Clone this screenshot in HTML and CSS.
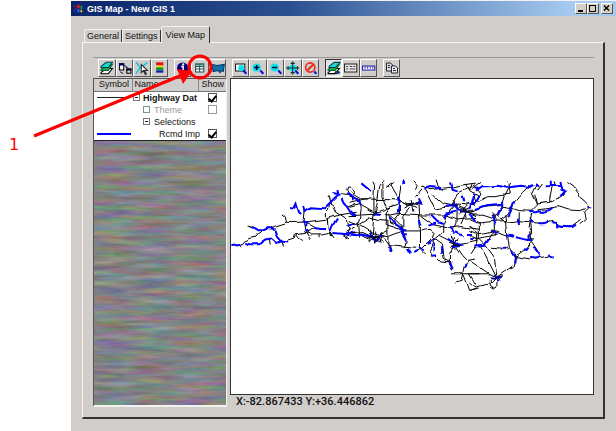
FILE: index.html
```html
<!DOCTYPE html>
<html lang="en">
<head>
<meta charset="utf-8">
<title>GIS Map - New GIS 1</title>
<link rel="stylesheet" href="styles.css">
</head>
<body>
<main class="window">
  <header class="titlebar">
    <svg class="app-icon" viewBox="0 0 12 12" aria-hidden="true"><path fill="#e02020" d="M5 1h3v4H5z"/><path fill="#20a040" d="M9 2h2v4H9z"/><path fill="#3058e8" d="M5 6h3v4H5z"/><path fill="#e8d020" d="M9 7h2v3H9z"/><path fill="#c02020" d="M1 2h2v2H1zM2 5h2v1H2z"/><path fill="#2040c0" d="M1 7h2v2H1z"/></svg>
    <h1>GIS Map - New GIS 1</h1>
    <div class="window-buttons">
      <button aria-label="Minimize"><svg viewBox="0 0 10 9"><path d="M2 7h5" stroke="#000" stroke-width="2"/></svg></button>
      <button aria-label="Maximize"><svg viewBox="0 0 10 9"><path d="M1.500 1v6.500h6V1M1 1.500h7" fill="none" stroke="#000"/><path d="M1 1h7v1H1z"/></svg></button>
      <button class="close" aria-label="Close"><svg viewBox="0 0 10 9"><path d="M2 1.500l5 5M7 1.500l-5 5" stroke="#000" stroke-width="1.500"/></svg></button>
    </div>
  </header>

  <nav class="tabs">
    <button class="tab">General</button>
    <button class="tab">Settings</button>
    <button class="tab active">View Map</button>
  </nav>

  <section class="panel">
    <div class="toolbar">
      <div class="group four">
        <button aria-label="Layers"><svg viewBox="0 0 15 15"><path d="M2 12l5-4h6l-4 5H2z" fill="#fff" stroke="#000"/><path d="M2 9l5-5h6L9 10H2z" fill="#20a040" stroke="#064"/><path d="M2 6l5-4h6L9 7H2z" fill="#20d8d8" stroke="#044"/></svg></button>
        <button aria-label="Join"><svg viewBox="0 0 15 15"><path d="M2.500 3.500h4v6h-4z" fill="#fff" stroke="#000"/><path d="M2 3h5v2H2zM9 8h5v2H9z" fill="#006"/><path d="M9.500 8.500h4v4h-4z" fill="none" stroke="#000"/><path d="M7 5l4 3M3 11l3 2" stroke="#224"/></svg></button>
        <button aria-label="Select"><svg viewBox="0 0 15 15"><path d="M2 2l4 5-4 6M13 2L7 7" fill="none" stroke="#10c8e0" stroke-width="1.500"/><path d="M7 4v8l2-2 2 4 1-1-2-3h3z" fill="#fff" stroke="#222"/></svg></button>
        <button aria-label="Theme colors"><svg viewBox="0 0 15 15"><path d="M4 2h7v3H4z" fill="#e01010"/><path d="M4 5h7v2H4z" fill="#e8d010"/><path d="M4 7h7v3H4z" fill="#109030"/><path d="M4 10h7v2H4z" fill="#1010c0"/></svg></button>
      </div>
      <div class="group three">
        <button aria-label="Info"><svg viewBox="0 0 15 15"><circle cx="7.500" cy="7.500" r="5.500" fill="#000080"/><path d="M6 6h2v5M6 11h4" stroke="#fff" fill="none" stroke-width="1.500"/><path d="M7 3h2v2H7z" fill="#fff"/></svg></button>
        <button aria-label="Table"><svg viewBox="0 0 15 15"><path d="M3.500 3.500h8v8h-8zM3.500 6h8M3.500 8.500h8M7.500 4v8" fill="#fff" stroke="#24504c"/><path d="M3 3h9v2H3z" fill="#347c78"/></svg></button>
        <button aria-label="State map"><svg viewBox="0 0 15 15"><path d="M2 4l5 1 7-1-1 7-2-1-1 2-2-2-5 1z" fill="#1070a8" stroke="#003868"/></svg></button>
      </div>
      <div class="group five">
        <button aria-label="Zoom window"><svg viewBox="0 0 15 15"><path d="M2.500 3.500h9v7h-9z" fill="#fff" stroke="#111"/><circle cx="8" cy="7.500" r="3" fill="#10e0e8"/><path d="M10 10l3 3" stroke="#0010e0" stroke-width="2"/></svg></button>
        <button aria-label="Zoom in"><svg viewBox="0 0 15 15"><circle cx="6.500" cy="7" r="4" fill="#10e0e8"/><path d="M4 7h5M6.500 4.500v5" stroke="#003" stroke-width="1.500"/><path d="M10 10l3 3" stroke="#0010e0" stroke-width="2"/></svg></button>
        <button aria-label="Zoom out"><svg viewBox="0 0 15 15"><circle cx="6.500" cy="7" r="4" fill="#10e0e8"/><path d="M4 7h5" stroke="#003" stroke-width="1.500"/><path d="M10 10l3 3" stroke="#0010e0" stroke-width="2"/></svg></button>
        <button aria-label="Zoom extents"><svg viewBox="0 0 15 15"><circle cx="7.500" cy="7.500" r="3.500" fill="#10e0e8"/><path d="M1 7.500h13M7.500 1v13M3 5.500v4M12 5.500v4M5.500 3h4M5.500 12h4" stroke="#033"/><path d="M10 10l3 3" stroke="#0010e0" stroke-width="2"/></svg></button>
        <button aria-label="Clear zoom"><svg viewBox="0 0 15 15"><circle cx="7" cy="7" r="4.500" fill="#c8d0d0" stroke="#f02818" stroke-width="1.500"/><path d="M4 10l6-6" stroke="#f02818" stroke-width="2"/><path d="M11 11l2 2" stroke="#0010e0" stroke-width="2"/></svg></button>
      </div>
      <div class="group three">
        <button class="pressed" aria-label="Show layers"><svg viewBox="0 0 15 15"><path d="M2 12l5-4h6l-4 5H2z" fill="#fff" stroke="#000"/><path d="M2 9l5-5h6L9 10H2z" fill="#20a040" stroke="#064"/><path d="M3 6l5-4h6L9 7H3z" fill="#20d8d8" stroke="#044"/><path d="M8 12q3-4 6 0-3 3-6 0" fill="#104020"/><circle cx="11" cy="12" r="1" fill="#22f"/></svg></button>
        <button aria-label="Legend"><svg viewBox="0 0 15 15"><path d="M1.500 3.500h12v8h-12z" fill="#e8e8e8" stroke="#222"/><path d="M3 6h2M3 8.500h2M6.500 6H9M6.500 8.500H12M10 6h2" stroke="#444"/></svg></button>
        <button aria-label="Scale"><svg viewBox="0 0 15 15"><path d="M1.500 5.500h12v4h-12z" fill="#fff" stroke="#1818a0"/><path d="M4 6v2M6.500 6v2M9 6v2M11.500 6v2" stroke="#1818a0"/></svg></button>
      </div>
      <div class="group one">
        <button aria-label="Copy"><svg viewBox="0 0 15 15"><path d="M2.500 2.500h4l2 2v6h-6z" fill="#ddd" stroke="#222"/><path d="M7.500 5.500h4l2 2v5h-6z" fill="#eee" stroke="#224"/><path d="M4 5h2M4 7h2M9 8h2M9 10h3" stroke="#224"/></svg></button>
      </div>
    </div>

    <div class="content">
      <div class="legend">
        <table>
          <thead><tr><th class="symbol-col">Symbol</th><th>Name</th><th class="show-col">Show</th></tr></thead>
          <tbody>
            <tr><td><i class="line"></i></td><td><div class="name root"><i class="toggle"></i>Highway Dat</div></td><td class="show"><input type="checkbox" checked aria-label="Show Highway Dat"></td></tr>
            <tr><td></td><td><div class="name child muted"><i class="swatch"></i>Theme</div></td><td class="show"><input type="checkbox" class="dim" aria-label="Show Theme"></td></tr>
            <tr><td></td><td><div class="name child"><i class="toggle"></i>Selections</div></td><td></td></tr>
            <tr><td><i class="line blue"></i></td><td><div class="name leaf">Rcmd Imp</div></td><td class="show"><input type="checkbox" checked aria-label="Show Rcmd Imp"></td></tr>
          </tbody>
        </table>
        <svg class="weave" aria-hidden="true">
          <filter id="weave" x="0" y="0" width="100%" height="100%" color-interpolation-filters="sRGB">
            <feTurbulence type="fractalNoise" baseFrequency="0.025 0.2" numOctaves="4" seed="7"/>
            <feColorMatrix values=".4 0 0 0 .31  0 .35 0 0 .34  0 0 .4 0 .32  0 0 0 0 1"/>
          </filter>
          <rect width="100%" height="100%" filter="url(#weave)"/>
        </svg>
      </div>
      <div class="map-column">
        <div class="map">
          <svg viewBox="231 78 363 315" preserveAspectRatio="xMinYMin meet" role="img" aria-label="Highway network">
            <filter id="meander" filterUnits="userSpaceOnUse" x="231" y="170" width="363" height="130">
              <feTurbulence type="fractalNoise" baseFrequency="0.08" numOctaves="1" seed="3"/>
              <feDisplacementMap in="SourceGraphic" scale="6" xChannelSelector="R" yChannelSelector="G"/>
            </filter>
            <g filter="url(#meander)">
            <g class="roads" transform="translate(226 170) scale(.33333)">
              <path d="M45 222L52 212 72 203 90 200 98 190 112 179 130 173M65 166l20 6 12 8M168 130l10 8 4 17-32 10-12 7 12 16M182 155l16 1 42-2 60-8 40-13 50-8M235 120l-3 30 6 32 17 11 35 0 25-6M238 154l32 18-30 13-30 5-5 15-20 7M300 140l-2-10 10-10 4-20 13 10 5 15 12 8M308 145l2 30 8 22M345 72l30 3-10-15 4-11 9 1 12 20M365 110l27-12M345 133l20 12 5 30-10 25M130 205l3 20M165 212l5 16M215 190l-2 10 15 10M240 185l13 20M280 193l0 10M315 187l10 15M345 190l25 15M310 80l8 25M360 185l30-18"/>
              <path class="sel" d="M13 224l10-2 10 3 12-3M55 216l10 5 35 0 6-6 12-8 17-3 7 5 8 8 13-4 22 3M78 169l12 5 8 5 20-1 12-6 16 3M146 178l5 15 14 17M190 112l13 2 6-12 5 18 12 10M232 106l4 15 8-6 13-5 42 3 13-13 12-12 16-15M320 70l18 3-3-12M345 82l6 13 12 12 10 16 14 12M265 172l20 3 16 0M314 182l8-20 12-18M320 187l44 4 24-3M365 70l12 6 8 12M228 152l13 3-4 12M236 180l8-3M362 168l28-12M362 196l16-10"/>
            </g>
            <g class="roads" transform="translate(350 170) scale(.33333)">
              <path d="M0 60l15 12 20 12 45 2 70 2 20 12 40-5M0 80l30 6 5 30-8 40 3 45M70 30l5 12-2 40 0 50-5 60M100 32l-10 15-6 45-9 45M100 42l0 35 15 40 8 40 25 10M155 40l-6 40 1 50-20 25M0 110l30-8 45 26 30-8 40-18M0 135l75-4 50 2 25-5 65 5 35 0 40 0 30 12 60-5M30 160l30-18 30 8 25 2 0 70 50 5 40 4M0 150l30 12 40 25 45 12 45-18 52 0 30-5 12 10-5 15 30 22 5 40 20 12M150 90l30 15 25-15 5 90 0 55M180 110l-20 25 0 50M130 105l-20 22 0 35 45 15M195 75l25-30M230 60l15 30 12 25 50-8 20-40 50-25M190 30l10 12-5 12M130 35l-20 15M120 40l25 45M0 95l55-12M215 133l40 30 40 10 40-5 55 8M320 100l60 5M320 100l0 60-15 35 20 28 65-12M320 100l-30 35-10 30 0 20-25 20-15 35 5 20M215 45l30 12 65-8 35-8 35-4M345 40l15 25 30 10M250 75l30 25 30 5M320 220l-20 30 0 30 10 20M320 225l20 30 15 15 25-5M245 205l-30 30-20 12M250 250l20 20 35 5M355 270l-10 20-5 20M305 310l85 0M340 310l-5 20-20 5M340 310l18 50 32-8M360 310l25 40M270 195l55 28M100 200l20 25 5 22M210 235l15 15M125 135l30 30 15 45-5 20M80 200l35-20M60 205l-25-10M65 215l-5-40M88 215l10-30M350 120l-40-20 5-15M340 120l20-20M350 120l30 15M350 125l-15 35M260 30l5 15 15 12M365 40l-8 20M0 190l40-4 30 14"/>
              <path class="sel" d="M35 38l20 16 10 10M0 75l25 10 8 20M75 131l14 2M120 140l20 22 15 10 4 20 10 18M175 232l10 17M160 30l5 10M145 78l5 15-5 32M225 55l20-6 30 4M305 35l5 20 18 4M375 50l15 2M315 95l0 15 10 10 35 5M245 135l20 20 15 5M283 140l10-12 25-5M205 80l10 20-20-6M208 145l5 20M240 165l20-6M150 175l20 5M160 190l12 2M300 170l12 10 5 12M320 185l20 10M0 195l20 2 15-5 40 8 20-4M60 185l20 30 10-25M295 205l40 18-25 5M235 220l18-14M208 230l15 10M195 247l10-6M115 225l10 20M252 240l0-22M245 255l15 0M278 230l0 20M302 275l8 22M348 280l-2 15M350 190l15 0M290 108l28-2M340 75l5 20"/>
              <path class="knot" d="M60 190l40 22M65 210l33-25M75 180l3 42M55 202l50-4M62 196l32 20M170 96l30 15M165 112l45-22M185 88l5 35M173 105l37-8M325 113l40 15M325 130l40-18M345 105l5 35M335 122l38 0M300 215l35 10M305 232l25-25M318 203l2 32M285 273l20 0"/>
            </g>
            <g class="roads" transform="translate(470 170) scale(.33333)">
              <path d="M0 60l35-28M20 50l15 20-20 35M125 35l-20 40-10 35-20 35 0 50M115 35l5 35-40 8-25 0-25 15M185 40l-25 25-25 30-20 35-20 15M205 40l-15 30 15 30 35-5 40-18 10-10M200 75l5 28-20 20-8 50 10 40 20 30M250 45l-8 35 0 15M295 32l20 15 10 15 10 20 15 12 12 15-15 15 5 20-20 15M190 122l-40-2-30-10-30-5-45 5-40 15M190 155l-40-5-40 5-35-25M0 145l30 12 45-5 35-2M0 165l30 25 45-10 45 15 10 5M30 155l0 50 20 20M0 180l25 10 0 30-20 30M75 175l-30 50-15 5M110 130l5 60 5 40 15 28M150 125l0 30M178 185l10 25-25 30-25 18 40 7 35-3 35-7M35 230l25 50 20 40M50 225l25 35 8 60 50-35 3-30M65 230l55 5M0 270l30 20 30 20 20 10M0 310l60 0M80 320l-20 20-40 10-20-15M80 320l0 30-8 6-12-8 0-20M20 355l-20 5M0 105l20-12-8-20M220 40l-15 20M185 190l-5-50M255 32l5 15M75 145l-45-15-30 0M0 195l25 10 60-15M205 118l40-6 20-4 30 10 40 2 15-6M190 156l30 2 35-6 20 18 30-2 20-14 10-8"/>
              <path class="sel" d="M0 118l8-20 8-28M20 60l20-14 25 1 20-2 25 6 45-6 25 3 15-8M10 105l10-10 10-18M20 118l35-12 40-4 5-8M85 135l15-35M245 30l0 16-15 1M245 46l32-1-3-14M277 45l3 12 12 5-15 14M135 92l-8 25-10 20M200 40l10 8M180 125l20 0 8-3 12 2 20-6 10-6M180 150l10 7M210 158l15 0 12-5M250 155l14 2 0 10 30 3 15 0 12-8M355 108l12 3M0 130l15 20M70 132l8 30M65 178l20 6M115 195l20 2M140 200l20 5 18 4M178 190l0 18 12 0M165 240l10-12M190 225l10 12 14 20M150 160l-5-20M0 205l15 0M15 228l35-2M60 205l-15 20M98 235l15 0M125 240l13 18-3 18M180 262l20 3 15-6M240 252l14 3M60 320l20 4 20-6M75 312l10 20"/>
              <path class="knot" d="M60 322l40-6M70 310l20 20M15 155l25 5M65 175l25 5M70 125l12 25M135 245l5 18M180 205l15 0"/>
            </g>
            </g>
          </svg>
        </div>
        <output class="status">X:-82.867433 Y:+36.446862</output>
      </div>
    </div>
  </section>
</main>

<div class="callout">
  <svg viewBox="0 0 220 160" aria-hidden="true"><path d="M34 136L182 75" stroke="#f00" stroke-width="3"/><path d="M177 69l15 2-9 13z" fill="#f00"/><circle cx="200" cy="67" r="11" fill="none" stroke="#f00" stroke-width="3"/></svg>
  <span class="callout-number">1</span>
</div>
</body>
</html>
```
FILE: styles.css
```css
* { box-sizing: border-box; }

body {
  margin: 0;
  min-height: 100vh;
  display: flex;
  background: #fff;
  color: #111;
  font: 9px/12px "Liberation Sans", sans-serif;
}

button {
  font: inherit;
  color: inherit;
  padding: 0;
}

.window {
  flex: 1;
  min-width: 0;
  margin-left: 71px;
  display: flex;
  flex-direction: column;
  background: #d1cdca;
  border-top: 1px solid #f4f2f0;
}

.titlebar {
  height: 15px;
  display: flex;
  align-items: center;
  gap: 4px;
  padding: 0 3px 0 2px;
  background: linear-gradient(90deg, #0a246a, #2c5090 40%, #a6caf0 92%);
}

.app-icon { width: 10px; height: 12px; }

.titlebar h1 {
  flex: 1;
  margin: 0;
  color: #fff;
  font: bold 9px/14px "Liberation Sans", sans-serif;
}

.window-buttons { display: flex; }

.window-buttons button {
  width: 12px;
  height: 11px;
  display: flex;
  background: #d4d0c8;
  border: 1px solid;
  border-color: #fff #555 #555 #fff;
}

.window-buttons .close { margin-left: 2px; }
.window-buttons svg { width: 100%; height: 100%; }

.tabs {
  display: flex;
  align-items: flex-end;
  height: 26px;
  padding-left: 13px;
}

.tab {
  height: 13px;
  padding: 0 2px;
  line-height: 12px;
  background: #d1cdca;
  border: 1px solid;
  border-color: #f4f2f0 #333 transparent #f4f2f0;
  border-bottom: 0;
  border-radius: 2px 2px 0 0;
}

.tab.active {
  position: relative;
  height: 17px;
  margin-bottom: -1px;
  padding: 0 4px;
  line-height: 16px;
}

.panel {
  flex: 1;
  min-height: 0;
  display: flex;
  flex-direction: column;
  margin: 0 11px 12px;
  padding: 14px 9px 10px 10px;
  border: 1px solid;
  border-color: #f8f6ee #333 #333 #f8f6ee;
  border-right-width: 2px;
  border-bottom-width: 2px;
}

.toolbar {
  display: flex;
  gap: 6px;
  padding: 1px 6px 1px 5px;
  border-top: 1px solid #999;
}

.group { display: flex; }
.four { width: 70px; }
.three { width: 52px; }
.five { width: 87px; }
.one { width: 17px; }

.toolbar button {
  flex: 1;
  height: 18px;
  display: flex;
  background: #d1cdca;
  border: 1px solid;
  border-color: #fff #555 #555 #fff;
}

.toolbar button.pressed {
  background: #e4e2e0;
  border-color: #333 #fff #fff #333;
}

.toolbar svg { width: 100%; height: 100%; }

.content {
  flex: 1;
  min-height: 0;
  display: grid;
  grid-template-columns: 134px minmax(0, 1fr);
  gap: 3px;
}

.legend {
  display: flex;
  flex-direction: column;
  min-height: 0;
  border: 1px solid;
  border-color: #555 #f4f2f0 #f4f2f0 #555;
  border-bottom-width: 2px;
}

.legend table {
  width: 100%;
  table-layout: fixed;
  border-collapse: collapse;
  background: #fff;
  border-bottom: 1px solid #222;
}

.legend th {
  height: 12px;
  padding: 0 0 0 2px;
  background: #d1cdca;
  border-right: 1px solid #888;
  border-bottom: 1px solid #777;
  font-weight: normal;
  text-align: left;
  line-height: 11px;
}

.legend th.symbol-col { width: 38px; padding-left: 5px; }
.legend th.show-col { width: 28px; padding-left: 3px; border-right: 0; }

.legend td {
  height: 12px;
  padding: 0;
}

.line {
  display: block;
  height: 1px;
  margin: 0 1px 0 3px;
  background: #222;
}

.line.blue { height: 2px; background: #00f; }

.name {
  display: flex;
  align-items: center;
  gap: 4px;
  white-space: nowrap;
}

.root {
  gap: 3px;
  padding-left: 1px;
  font-weight: bold;
}

.child { padding-left: 11px; }
.leaf { padding-left: 27px; }
.muted { color: #999; }

.toggle, .swatch {
  flex: none;
  width: 7px;
  height: 7px;
  border: 1px solid #777;
}

.toggle { background: linear-gradient(#222, #222) center / 3px 1px no-repeat; }
.muted .swatch { border-color: #798; }

.show { text-align: center; line-height: 0; }

input[type="checkbox"] {
  appearance: none;
  width: 9px;
  height: 9px;
  margin: 0;
  border: 1px solid #555;
  background: #fff;
}

input.dim { border-color: #999; }

input:checked::after {
  content: "";
  display: block;
  width: 3px;
  height: 6px;
  margin: 0 auto;
  border: solid #000;
  border-width: 0 2px 2px 0;
  transform: rotate(40deg);
}

.weave {
  display: block;
  width: 100%;
  flex: 1;
  min-height: 0;
  height: 0;
}

.map-column {
  display: flex;
  flex-direction: column;
  min-height: 0;
}

.map {
  flex: 1;
  min-height: 0;
  overflow: hidden;
  background: #fff;
  border: 1px solid #333;
}

.map svg { display: block; width: 100%; }

.roads path {
  fill: none;
  stroke: #000;
  stroke-width: 3;
}

.roads .sel { stroke: #00f; stroke-width: 6; }
.roads .knot { stroke: #112; }

.status {
  height: 12px;
  padding-left: 6px;
  font: 500 11px/14px Roboto, sans-serif;
}

.callout {
  position: absolute;
  top: 0;
  left: 0;
  width: 220px;
  height: 160px;
  pointer-events: none;
}

.callout svg { width: 100%; height: 100%; }

.callout-number {
  position: absolute;
  left: 9px;
  top: 136px;
  color: #f00;
  font: 16px/18px "DejaVu Sans", sans-serif;
}
```
